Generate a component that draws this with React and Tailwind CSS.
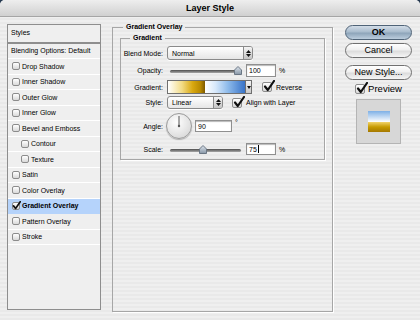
const stripes =
  "bg-[repeating-linear-gradient(to_bottom,#efefef_0px,#efefef_2px,#e9e9e9_2px,#e9e9e9_4px)]";

const CheckBox = ({ on, big }) => (
  <span
    className={
      "relative inline-block shrink-0 rounded-[2px] border border-[#8c8c8c] bg-[linear-gradient(#ffffff,#d9d9d9)] " +
      (big ? "w-[10px] h-[10px]" : "w-[8px] h-[8px]")
    }
  >
    {on && (
      <svg
        className={big ? "absolute left-[0px] top-[-3px]" : "absolute left-[-1px] top-[-2px]"}
        width={big ? 12 : 9}
        height={big ? 12 : 9}
        viewBox="0 0 12 12"
      >
        <path d="M2 6.5 L4.8 10 L11 1" fill="none" stroke="#111" strokeWidth="2.2" strokeLinecap="round" strokeLinejoin="round" />
      </svg>
    )}
  </span>
);

const styles = [
  { name: "Drop Shadow" },
  { name: "Inner Shadow" },
  { name: "Outer Glow" },
  { name: "Inner Glow" },
  { name: "Bevel and Emboss" },
  { name: "Contour", sub: true },
  { name: "Texture", sub: true },
  { name: "Satin" },
  { name: "Color Overlay" },
  { name: "Gradient Overlay", on: true },
  { name: "Pattern Overlay" },
  { name: "Stroke" },
];

const Stepper = () => (
  <div className="flex w-[9px] h-full flex-col items-center justify-center gap-[1px] rounded-r-[2px] border-l border-[#8a8a8a] bg-[linear-gradient(#f4f4f4,#c4c4c4)]">
    <svg width="5" height="3" viewBox="0 0 5 3"><path d="M0 3 L2.5 0 L5 3 Z" fill="#111" /></svg>
    <svg width="5" height="3" viewBox="0 0 5 3"><path d="M0 0 L2.5 3 L5 0 Z" fill="#111" /></svg>
  </div>
);

const Select = ({ value, className }) => (
  <div className={"flex h-full rounded-[3px] border border-[#8a8a8a] bg-[linear-gradient(#ffffff,#e6e6e6)] shadow-[0_1px_0_#ffffff] " + className}>
    <span className="flex-1 pl-[4px] leading-none self-center">{value}</span>
    <Stepper />
  </div>
);

const Slider = ({ value, min, max, id }) => {
  const pos = ((value - min) / (max - min)) * 66;
  return (
    <div className="relative w-[77px] h-full">
      <div className="absolute left-[3px] top-[6px] w-[71px] h-[3px] rounded-full bg-[linear-gradient(#4d4d4d,#a8a8a8)]" />
      <svg className="absolute top-[2px]" style={{ left: pos + 1 }} width="8" height="9" viewBox="0 0 8 9">
        <defs>
          <linearGradient id={id} x1="0" y1="0" x2="0" y2="1">
            <stop offset="0" stopColor="#dfe6ee" />
            <stop offset="1" stopColor="#8796a6" />
          </linearGradient>
        </defs>
        <path d="M0.5 8.5 V4 L4 0.5 L7.5 4 V8.5 Z" fill={`url(#${id})`} stroke="#6a7684" strokeWidth="1" />
      </svg>
    </div>
  );
};

const Field = ({ value, caret, w = "w-[30px]" }) => (
  <div className={"flex items-center h-full border border-[#8f8f8f] bg-white pl-[2px] shadow-[inset_0_1px_1px_#b8b8b8] " + w}>
    <span className="leading-none">{value}</span>
    {caret && <span className="ml-[1px] h-[8px] w-px bg-black" />}
  </div>
);

const Label = ({ children }) => (
  <span className="w-[42px] shrink-0 text-right leading-none">{children}</span>
);

const Button = ({ children, primary }) => (
  <div
    className={
      "flex h-[15px] w-[67px] items-center justify-center rounded-full border leading-none " +
      (primary
        ? "border-[#4f6377] bg-[linear-gradient(#d3dde8,#a9bccd_45%,#8ea5ba_55%,#bccddd)] font-bold text-[9px]"
        : "border-[#707070] bg-[linear-gradient(#ffffff,#f0f0f0_45%,#dcdcdc_55%,#f6f6f6)] text-[9px]")
    }
  >
    {children}
  </div>
);

export default function App() {
  return (
    <div className="w-[420px] h-[320px] overflow-hidden bg-[#24384f] font-['Liberation_Sans',Arial,sans-serif] text-black">
      <div className={"flex h-full flex-col rounded-t-[5px] overflow-hidden " + stripes}>
        <div className="flex h-[17px] shrink-0 items-center justify-center border-b border-[#a5a5a5] bg-[linear-gradient(#eeeeee,#d0d0d0)] text-[9px] font-bold leading-none">
          Layer Style
        </div>

        <div className="flex items-start pl-[7px] text-[7px]">
          {/* styles list */}
          <div className="mt-[7px] h-[286px] w-[94px] border border-[#8e8e8e] bg-[#efefef]">
            <div className="flex h-[17px] items-center pl-[3px]">Styles</div>
            <div className="h-[2px] bg-[#8e8e8e]" />
            <div className="flex h-[15px] items-center border-b border-white pl-[3px]">Blending Options: Default</div>
            {styles.map((s) => (
              <div
                key={s.name}
                className={
                  "flex h-[15.5px] items-center gap-[2px] border-b " +
                  (s.on ? "border-[#b5d3fb] bg-[#b5d3fb] font-bold" : "border-white") +
                  (s.sub ? " pl-[13px]" : " pl-[4px]")
                }
              >
                <CheckBox on={s.on} />
                <span className="leading-none">{s.name}</span>
              </div>
            ))}
          </div>

          {/* gradient overlay */}
          <fieldset className="ml-[11px] mt-[5px] h-[290px] w-[221px] border border-[#a6a6a6] px-[7px] shadow-[1px_1px_0_#ffffff]">
            <legend className="ml-[3px] px-[3px] text-[7px] font-bold leading-[10px]">Gradient Overlay</legend>
            <fieldset className="mt-[1px] border border-[#a6a6a6] pb-[4px] shadow-[1px_1px_0_#ffffff]">
              <legend className="ml-[9px] px-[3px] text-[7px] font-bold leading-[10px]">Gradient</legend>

              <div className="mt-[3px] flex h-[14px] items-center gap-[4px]">
                <Label>Blend Mode:</Label>
                <Select value="Normal" className="w-[86px]" />
              </div>

              <div className="mt-[4px] flex h-[13px] items-center gap-0">
                <Label>Opacity:</Label>
                <span className="w-[4px]" />
                <Slider value={100} min={0} max={100} id="t1" />
                <span className="w-[2px]" />
                <Field value="100" />
                <span className="ml-[3px] leading-none">%</span>
              </div>

              <div className="mt-[3px] flex h-[14px] items-center gap-[4px]">
                <Label>Gradient:</Label>
                <div className="flex h-full w-[85px] border border-[#6f6f6f]">
                  <div className="flex-1 bg-[linear-gradient(to_right,#ffffff_0%,#f3dc86_18%,#d9a810_32%,#b98a00_42%,#7e5a00_48%,#ffffff_48.5%,#d6e8fb_62%,#8dbaea_78%,#3873c8_100%)]" />
                  <div className="flex w-[6px] items-center justify-center border-l border-[#6f6f6f] bg-[linear-gradient(#f4f4f4,#c8c8c8)]">
                    <svg width="4" height="3" viewBox="0 0 4 3"><path d="M0 0 L2 3 L4 0 Z" fill="#111" /></svg>
                  </div>
                </div>
                <span className="w-[2px]" />
                <CheckBox on big />
                <span className="leading-none">Reverse</span>
              </div>

              <div className="mt-[2px] flex h-[13px] items-center gap-[4px]">
                <Label>Style:</Label>
                <Select value="Linear" className="w-[56px]" />
                <span className="w-[1px]" />
                <CheckBox on big />
                <span className="leading-none">Align with Layer</span>
              </div>

              <div className="mt-[4px] flex h-[26px] items-center gap-[3px]">
                <Label>Angle:</Label>
                <div className="relative h-[26px] w-[26px] shrink-0 rounded-full border border-[#9a9a9a] bg-[radial-gradient(circle_at_40%_35%,#ffffff,#dedede_70%,#c8c8c8)] shadow-[0_1px_1px_#b0b0b0]">
                  <svg className="absolute left-0 top-0" width="24" height="24" viewBox="0 0 24 24">
                    <line x1="12" y1="12" x2="12" y2="2" stroke="#555" strokeWidth="1" />
                    <circle cx="12" cy="12" r="1.2" fill="#555" />
                  </svg>
                </div>
                <div className="h-[12px]">
                  <Field value="90" w="w-[37px]" />
                </div>
                <span className="self-start mt-[6px] leading-none">°</span>
              </div>

              <div className="mt-[4px] flex h-[12px] items-center">
                <Label>Scale:</Label>
                <span className="w-[4px]" />
                <Slider value={75} min={10} max={150} id="t2" />
                <span className="w-[2px]" />
                <Field value="75" caret />
                <span className="ml-[3px] leading-none">%</span>
              </div>
            </fieldset>
          </fieldset>

          {/* buttons */}
          <div className="ml-[12px] mt-[8px] flex w-[67px] flex-col items-center">
            <Button primary>OK</Button>
            <div className="mt-[3px]"><Button>Cancel</Button></div>
            <div className="mt-[7px]"><Button>New Style...</Button></div>
            <div className="mt-[3px] flex h-[11px] items-center gap-[3px]">
              <CheckBox on big />
              <span className="text-[9.5px] leading-none">Preview</span>
            </div>
            <div className="mt-[5px] flex h-[45px] w-[45px] items-center justify-center border border-[#b4b4b4] bg-[#d7d7d7]">
              <div className="flex h-[21px] w-[22px] flex-col">
                <div className="flex-1 bg-[linear-gradient(#7eb0e6,#ffffff)]" />
                <div className="flex-1 bg-[linear-gradient(#f2d36a,#c69a00_50%,#a57800)]" />
              </div>
            </div>
          </div>
        </div>
      </div>
    </div>
  );
}
